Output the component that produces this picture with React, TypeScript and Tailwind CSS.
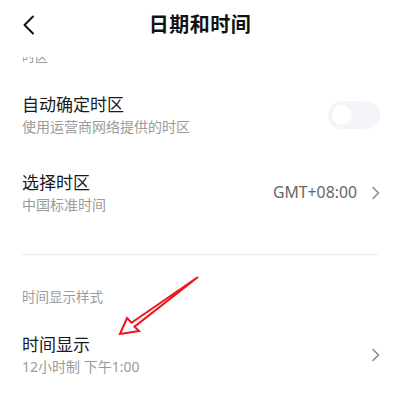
import React from 'react';

const font = "font-['Noto_Sans','Noto_Sans_CJK_SC',sans-serif]";

function ChevronRight() {
    return (
        <svg width="9" height="14" viewBox="0 0 9 14" fill="none" className="shrink-0">
            <path d="M2 1.5 L7.5 7 L2 12.5" stroke="#8a8a8a" strokeWidth="1.6" strokeLinecap="round" strokeLinejoin="round" />
        </svg>
    );
}

function Row({ title, subtitle, right }: { title: string; subtitle: string; right?: React.ReactNode }) {
    return (
        <div className="flex items-center justify-between pl-[22px] pr-[20px]">
            <div className="flex flex-col">
                <span className="text-[17px] leading-[24px] text-[#1a1a1a]">{title}</span>
                <span className="text-[14px] leading-[20px] text-[#9b9b9b]">{subtitle}</span>
            </div>
            {right}
        </div>
    );
}

export default function App() {
    return (
        <div className={`relative w-[400px] h-[403px] bg-white overflow-hidden ${font}`}>
            {/* Header */}
            <div className="grid grid-cols-[1fr_auto_1fr] items-center h-[50px] px-[22px]">
                <svg width="13" height="20" viewBox="0 0 13 20" fill="none">
                    <path d="M11 1.5 L2.5 10 L11 18.5" stroke="#111" strokeWidth="2" strokeLinecap="round" strokeLinejoin="round" />
                </svg>
                <h1 className="text-[20px] font-semibold text-[#111] tracking-[0.5px]">日期和时间</h1>
                <div />
            </div>

            {/* section label, scrolled partly under the header */}
            <div className="flex items-end h-[6px] mt-[7px] px-[22px] overflow-hidden">
                <span className="text-[13px] leading-[13px] text-[#9b9b9b] shrink-0">时区</span>
            </div>

            <div className="mt-[30px]">
                <Row
                    title="自动确定时区"
                    subtitle="使用运营商网络提供的时区"
                    right={
                        <div className="w-[52px] h-[28px] rounded-full bg-[#f3f5f8] flex items-center px-[4px]">
                            <div className="w-[20px] h-[20px] rounded-full bg-white" />
                        </div>
                    }
                />
            </div>

            <div className="mt-[34px]">
                <Row
                    title="选择时区"
                    subtitle="中国标准时间"
                    right={
                        <div className="flex items-center gap-[14px] -mt-[1px]">
                            <span className="text-[15.8px] text-[#666]">GMT+08:00</span>
                            <ChevronRight />
                        </div>
                    }
                />
            </div>

            <div className="mx-[22px] mt-[39px] h-px bg-[#ececec]" />

            <div className="mt-[33px] px-[22px] text-[13.5px] leading-[18px] text-[#9b9b9b]">时间显示样式</div>

            <div className="mt-[27px]">
                <Row title="时间显示" subtitle="12小时制 下午1:00" right={<ChevronRight />} />
            </div>

            {/* annotation arrow */}
            <svg className="absolute inset-0 pointer-events-none" width="400" height="403" viewBox="0 0 400 403" fill="none">
                <path
                    d="M120 334 L127 318 L131.5 322.7 L198 277 L134.5 326.7 L139 331 Z"
                    stroke="#f0141c"
                    strokeWidth="2"
                    strokeLinejoin="miter"
                />
            </svg>
        </div>
    );
}
